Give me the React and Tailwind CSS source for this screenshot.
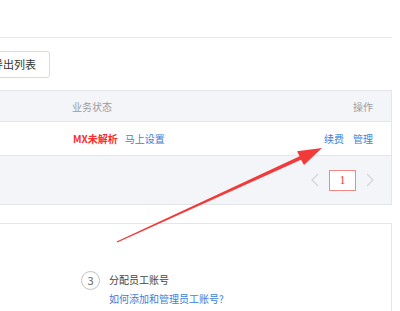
import React from "react";

const font = { fontFamily: '"Noto Sans CJK SC", "Noto Sans", sans-serif' };

// thin chevron used by the pager
const Chevron = ({ dir }) => (
  <svg className="w-[8px] h-[14px]" viewBox="0 0 8 14" fill="none">
    <polyline
      points={dir === "left" ? "7,1 1,7 7,13" : "1,1 7,7 1,13"}
      stroke="#d3d6dc"
      strokeWidth="1.3"
    />
  </svg>
);

// the red annotation arrow drawn over the screenshot
const Arrow = () => (
  <svg
    className="absolute left-0 top-0 pointer-events-none"
    width="400"
    height="311"
    viewBox="0 0 400 311"
  >
    <polygon
      points="117.3,242.6 301,159.8 304,165 322,148 297,151.2 299.6,156.3 116.7,241.4"
      fill="#f23a3a"
    />
  </svg>
);

export default function App() {
  return (
    <div
      className="relative w-[400px] h-[311px] overflow-hidden bg-white"
      style={font}
    >
      {/* top divider */}
      <div className="w-[392px] h-[38px] border-b border-[#e6e7ea]" />

      {/* toolbar */}
      <div className="pt-[12px]">
        <button className="-ml-[22px] h-[27px] px-[13px] border border-[#d9dbe0] rounded-[3px] bg-white text-[11px] text-[#333] leading-none">
          导出列表
        </button>
      </div>

      {/* table */}
      <div className="mt-[12px] w-[392px] border-y border-r border-[#e3e5ea]">
        <div className="h-[30px] flex items-center bg-[#f4f5f8] text-[10px] text-[#9a9ca2]">
          <span className="ml-[72px]">业务状态</span>
          <span className="ml-auto mr-[18px]">操作</span>
        </div>
        <div className="h-[34px] flex items-center border-t border-[#e3e5ea] text-[10px]">
          <span className="ml-[73px] font-bold text-[#ff2b2b]">MX未解析</span>
          <span className="ml-[7px] text-[#3b7ed8]">马上设置</span>
          <span className="ml-auto text-[#3b7ed8]">续费</span>
          <span className="ml-[9px] mr-[18px] text-[#3b7ed8]">管理</span>
        </div>
        <div className="h-[49px] flex items-center justify-end border-t border-[#e3e5ea] bg-[#f4f5f8]">
          <Chevron dir="left" />
          <div
            className="ml-[10px] w-[27px] h-[21px] flex items-center justify-center border border-[#f08a86] bg-white text-[12px] text-[#e5413c]"
            style={{ fontFamily: '"Liberation Serif", serif' }}
          >
            1
          </div>
          <div className="ml-[10px] mr-[17px]">
            <Chevron dir="right" />
          </div>
        </div>
      </div>

      {/* guide card */}
      <div className="mt-[18px] w-[392px] h-[120px] border-t border-r border-[#e3e5ea]">
        <div className="pt-[47px] pl-[81px] flex items-start">
          <div className="w-[19px] h-[19px] rounded-full border border-[#bfc2c7] flex items-center justify-center text-[11px] text-[#666]">
            3
          </div>
          <div className="ml-[9px] text-[10px] leading-none">
            <div className="pt-[4px] text-[#444]">分配员工账号</div>
            <div className="mt-[9px] text-[#3b7ed8]">如何添加和管理员工账号?</div>
          </div>
        </div>
      </div>

      <Arrow />
    </div>
  );
}
